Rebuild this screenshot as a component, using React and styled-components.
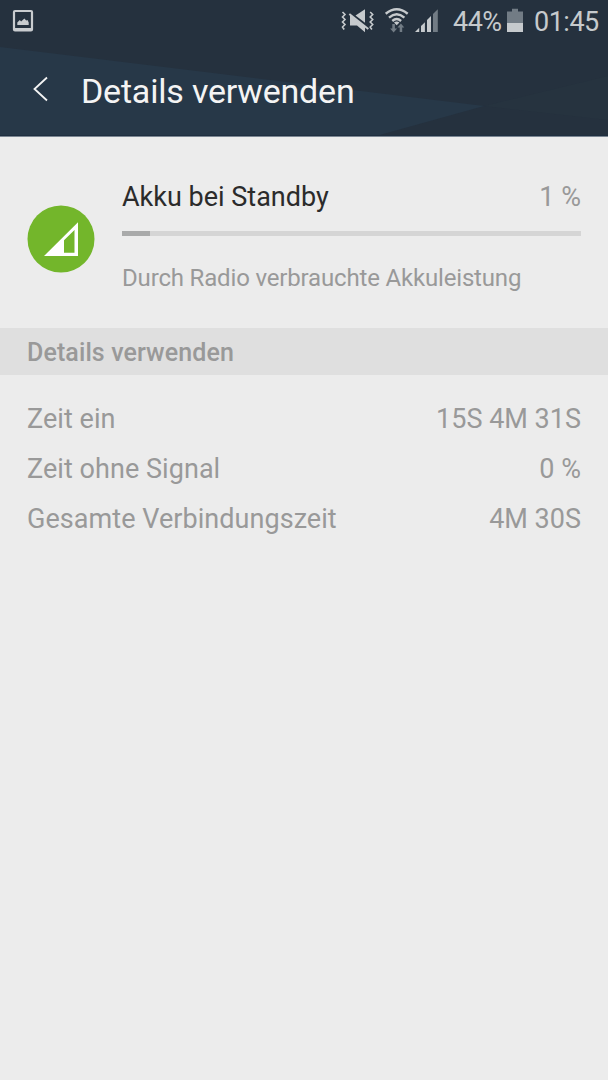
import React from 'react';
import styled, { createGlobalStyle } from 'styled-components';

const GlobalStyle = createGlobalStyle`
  html, body { margin: 0; padding: 0; background: #ececec; }
  * { box-sizing: border-box; }
`;

const Screen = styled.div`
  width: 608px;
  height: 1080px;
  overflow: hidden;
  display: flex;
  flex-direction: column;
  background: #ececec;
  color: #999;
  font-family: Roboto, sans-serif;
  white-space: nowrap;
`;

const Header = styled.header`
  position: relative;
  height: 137px;
  flex: none;
  background: #25313e;
  border-bottom: 1px solid #7b8692;
`;

const Backdrop = styled.svg`
  position: absolute;
  inset: 0;
`;

const StatusBar = styled.div`
  position: relative;
  display: flex;
  align-items: center;
  height: 42px;
  padding: 0 9px 0 12px;
  color: #c6cacd;
`;

const Icon = styled.svg`
  display: block;
  flex: none;
  margin-left: ${(p) => p.$gap || 0}px;
`;

const Spacer = styled.div`
  flex: 1;
`;

const StatusText = styled.span`
  width: ${(p) => p.$width}px;
  margin-left: ${(p) => p.$gap}px;
  padding-top: 2px;
  font-size: 27px;
  line-height: 42px;
  letter-spacing: ${(p) => p.$spacing || 0}px;
`;

const TitleBar = styled.div`
  position: relative;
  display: flex;
  align-items: center;
  height: 94px;
  padding-left: 32px;
`;

const Title = styled.h1`
  margin: 3px 0 0 31px;
  font-size: 34px;
  line-height: 40px;
  font-weight: 400;
  letter-spacing: -0.2px;
  color: #f4f4f4;
`;

const Summary = styled.section`
  display: flex;
  height: 191px;
  flex: none;
  padding: 40px 27px 0;
`;

const AppIcon = styled.svg`
  display: block;
  flex: none;
  margin-top: 28px;
`;

const SummaryBody = styled.div`
  flex: 1;
  margin-left: 27px;
`;

const Row = styled.div`
  display: flex;
  justify-content: space-between;
  font-size: 27px;
  line-height: ${(p) => p.$line}px;
`;

const Name = styled.span`
  color: #2b2b2b;
`;

const Label = styled.span`
  letter-spacing: 0.05px;
`;

const Track = styled.div`
  height: 5px;
  margin-top: 14px;
  background: #d5d5d5;
`;

const Fill = styled.div`
  width: 28px;
  height: 5px;
  background: #a9aaaa;
`;

const Description = styled.p`
  margin: 26px 0 0;
  font-size: 24px;
  line-height: 32px;
  letter-spacing: -0.17px;
`;

const SectionTitle = styled.h2`
  flex: none;
  height: 47px;
  margin: 0;
  padding: 1px 27px 0;
  background: #dfdfdf;
  font-size: 25px;
  line-height: 48px;
  font-weight: 500;
  letter-spacing: 0.1px;
`;

const Details = styled.section`
  padding: 19px 27px 0;
`;

const PictureIcon = () => (
  <Icon width="22" height="24" viewBox="12 9 22 24">
    <rect x="14" y="11" width="18" height="19.5" rx="1" fill="none" stroke="#c9cccf" strokeWidth="2.2" />
    <path d="M14 28h18v3H14z" fill="#c9cccf" />
    <path d="M17.3 25v-2.6l2.5-2.3 1.3 1.5 3.3-3 1.8 2 1.3-.5 1.2 2.3V25z" fill="#c9cccf" />
  </Icon>
);

const MuteVibrateIcon = () => (
  <Icon width="34" height="26" viewBox="341 8 34 26">
    <path d="M365 9.2v13.6l-9.5-7.4z M350 14.8l15 12v5.4l-8-6.7h-7z" fill="#c6cacd" />
    <path d="M349.3 14L368.3 29" stroke="#c6cacd" strokeWidth="2" />
    <path d="M342.5 12l2.5 2.5-2.5 2.5 2.5 2.5-2.5 2.5 2.5 2.5-2.5 2.5 1.7 2.5M370.2 12l2.5 2.5-2.5 2.5 2.5 2.5-2.5 2.5 2.5 2.5-2.5 2.5 1.7 2.5" fill="none" stroke="#c6cacd" strokeWidth="1.6" />
  </Icon>
);

const WifiIcon = () => (
  <Icon $gap="9" width="25" height="26" viewBox="384 8 25 26">
    <g fill="none" stroke="#c6cacd" strokeWidth="2.4">
      <path d="M385.7 13.8Q396.7 4.8 407.7 13.8" />
      <path d="M389 17.6Q396.7 11 404.4 17.6" />
      <path d="M392.3 21Q396.7 17.2 401.1 21" />
    </g>
    <path d="M394 22.4q2.7-1.6 5.4 0l-2.7 2.8z" fill="#c6cacd" />
    <path d="M392.3 24h2.6v4.5h2.2l-3.5 4-3.5-4h2.2zM399.7 32v-4.5h-2.2l3.4-4 3.4 4h-2.1V32z" fill="#727c85" />
  </Icon>
);

const SignalIcon = () => (
  <Icon $gap="6" width="24" height="26" viewBox="415 8 24 26">
    <path d="M415 32l4.2-4.2V32zM421 32v-6l3.9-3.8V32zM427 32V20l4-4v16z" fill="#c6cacd" />
    <path d="M433 32V14l4.8-4.8V32z" fill="#727c85" />
  </Icon>
);

const BatteryIcon = () => (
  <Icon $gap="2" width="17" height="26" viewBox="507 8 17 26">
    <path d="M507 11.5h5V8.8h6v2.7h5V23h-16z" fill="#727c85" />
    <path d="M507 23h16v9h-16z" fill="#c6cacd" />
  </Icon>
);

const rows = [
  ['Zeit ein', '15S 4M 31S'],
  ['Zeit ohne Signal', '0 %'],
  ['Gesamte Verbindungszeit', '4M 30S'],
];

export default function App() {
  return (
    <Screen>
      <GlobalStyle />
      <Header>
        <Backdrop width="608" height="136" viewBox="0 0 608 136">
          <path d="M0 47L484 106 376 136H0z" fill="#273848" />
          <path d="M484 106L608 76v44z" fill="#26333f" />
          <path d="M0 135.5h608" stroke="#1f2f40" />
        </Backdrop>
        <StatusBar>
          <PictureIcon />
          <Spacer />
          <MuteVibrateIcon />
          <WifiIcon />
          <SignalIcon />
          <StatusText $width={52} $gap={14} $spacing={-0.5}>44%</StatusText>
          <BatteryIcon />
          <StatusText $width={65} $gap={10} $spacing={-0.5}>01:45</StatusText>
        </StatusBar>
        <TitleBar>
          <Icon width="18" height="28" viewBox="32 75 18 28">
            <path d="M47 77.5L34.5 89 47 100.5" fill="none" stroke="#f4f4f4" strokeWidth="1.8" />
          </Icon>
          <Title>Details verwenden</Title>
        </TitleBar>
      </Header>
      <Summary>
        <AppIcon width="68" height="68" viewBox="27 205 68 68">
          <circle cx="61" cy="239" r="33.5" fill="#73b62b" />
          <path fillRule="evenodd" d="M44 256L78 222.3V256zM64 240.3V252.7H74.5V230z" fill="#fff" />
        </AppIcon>
        <SummaryBody>
          <Row $line={40}>
            <Name>Akku bei Standby</Name>
            <span>1 %</span>
          </Row>
          <Track><Fill /></Track>
          <Description>Durch Radio verbrauchte Akkuleistung</Description>
        </SummaryBody>
      </Summary>
      <SectionTitle>Details verwenden</SectionTitle>
      <Details>
        {rows.map(([label, value]) => (
          <Row key={label} $line={50}>
            <Label>{label}</Label>
            <span>{value}</span>
          </Row>
        ))}
      </Details>
    </Screen>
  );
}
